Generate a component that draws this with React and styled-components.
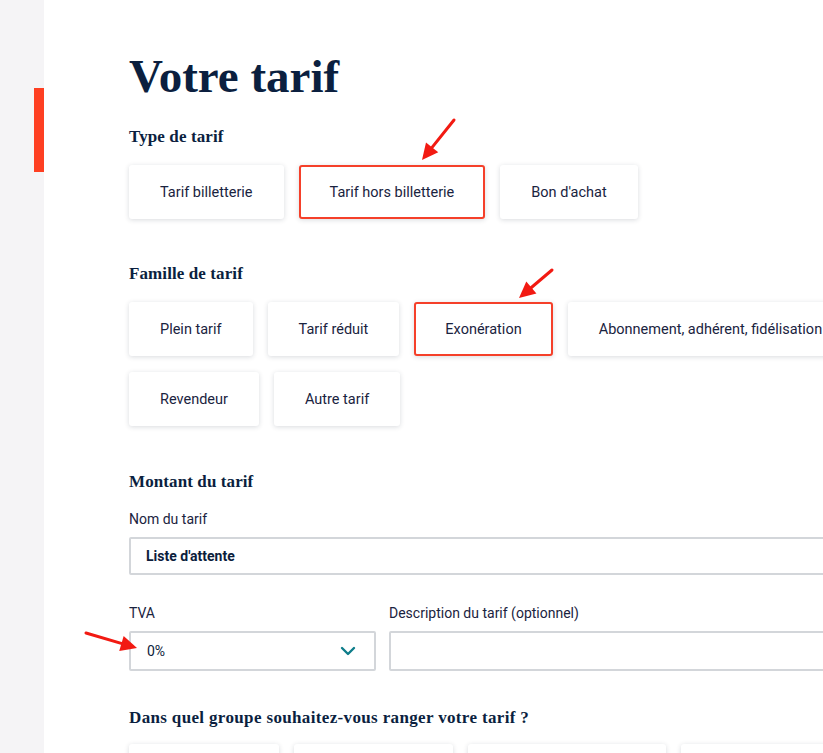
import styled, { createGlobalStyle } from "styled-components";

const GlobalStyle = createGlobalStyle`
  html, body {
    margin: 0;
    padding: 0;
    overflow: hidden;
    background: #ffffff;
  }
  * {
    box-sizing: border-box;
  }
`;

const TYPES = [
  { label: "Tarif billetterie" },
  { label: "Tarif hors billetterie", active: true },
  { label: "Bon d'achat" },
];

const FAMILIES = [
  { label: "Plein tarif" },
  { label: "Tarif réduit" },
  { label: "Exonération", active: true },
  { label: "Abonnement, adhérent, fidélisation" },
  { label: "Revendeur" },
  { label: "Autre tarif" },
];

// groups below the fold: only their top edge shows
const GROUPS = [150, 159, 198, 180];

const ARROWS = [
  { x1: 454, y1: 120, x2: 422, y2: 160 },
  { x1: 552, y1: 270, x2: 519, y2: 298 },
  { x1: 86, y1: 633, x2: 137, y2: 648 },
];

const Arrow = ({ x1, y1, x2, y2 }) => {
  const angle = Math.atan2(y2 - y1, x2 - x1);
  const len = 18;
  const spread = 0.45;
  const ax = x2 - len * Math.cos(angle - spread);
  const ay = y2 - len * Math.sin(angle - spread);
  const bx = x2 - len * Math.cos(angle + spread);
  const by = y2 - len * Math.sin(angle + spread);
  const ex = x2 - 12 * Math.cos(angle);
  const ey = y2 - 12 * Math.sin(angle);
  return (
    <g>
      <line x1={x1} y1={y1} x2={ex} y2={ey} stroke="#f21a12" strokeWidth="3" strokeLinecap="round" />
      <polygon points={`${x2},${y2} ${ax},${ay} ${bx},${by}`} fill="#f21a12" />
    </g>
  );
};

const Chevron = () => (
  <svg width="16" height="10" viewBox="0 0 16 10">
    <path d="M2 2l6 6 6-6" fill="none" stroke="#0e7d8a" strokeWidth="2.4" strokeLinecap="round" strokeLinejoin="round" />
  </svg>
);

const App = () => {
  return (
    <Page>
      <GlobalStyle />
      <Sidebar>
        <SideMarker />
      </Sidebar>
      <Main>
        <Title>Votre tarif</Title>

        <SectionTitle $top={21}>Type de tarif</SectionTitle>
        <Choices>
          {TYPES.map((item, idx) => (
            <Choice key={idx} $active={item.active}>
              {item.label}
            </Choice>
          ))}
        </Choices>

        <SectionTitle $top={43}>Famille de tarif</SectionTitle>
        <Choices>
          {FAMILIES.map((item, idx) => (
            <Choice key={idx} $active={item.active}>
              {item.label}
            </Choice>
          ))}
        </Choices>

        <SectionTitle $top={44}>Montant du tarif</SectionTitle>
        <Field $top={16}>
          <Label>Nom du tarif</Label>
          <Input $strong>Liste d'attente</Input>
        </Field>

        <FieldRow>
          <Field>
            <Label>TVA</Label>
            <Select>
              <span>0%</span>
              <Chevron />
            </Select>
          </Field>
          <Field>
            <Label>Description du tarif (optionnel)</Label>
            <Input $tall />
          </Field>
        </FieldRow>

        <SectionTitle $top={35} $wide>
          Dans quel groupe souhaitez-vous ranger votre tarif ?
        </SectionTitle>
        <Choices $top={14}>
          {GROUPS.map((width, idx) => (
            <Choice key={idx} style={{ width }} />
          ))}
        </Choices>
      </Main>
      <Annotations width="823" height="753" viewBox="0 0 823 753">
        {ARROWS.map((a, idx) => (
          <Arrow key={idx} {...a} />
        ))}
      </Annotations>
    </Page>
  );
};

export default App;

const Page = styled.div`
  position: relative;
  display: flex;
  width: 823px;
  height: 753px;
  overflow: hidden;
  background: #ffffff;
`;

const Sidebar = styled.aside`
  flex: 0 0 44px;
  display: flex;
  flex-direction: column;
  align-items: flex-end;
  padding-top: 88px;
  background: #f5f4f6;
`;

const SideMarker = styled.div`
  width: 10px;
  height: 84px;
  background: #fe3f22;
`;

const Main = styled.main`
  flex: 0 0 auto;
  width: 945px;
  padding: 49px 0 0 85px;
  color: #0c1d3c;
`;

const Title = styled.h1`
  margin: 0;
  font-family: "Liberation Serif", "DejaVu Serif", serif;
  font-weight: 700;
  font-size: 47px;
  line-height: 55px;
  color: #0b1f3f;
`;

const SectionTitle = styled.h2`
  margin: ${({ $top }) => $top || 0}px 0 0;
  font-family: "Liberation Serif", "DejaVu Serif", serif;
  font-weight: 700;
  font-size: 17px;
  line-height: 24px;
  letter-spacing: ${({ $wide }) => ($wide ? "0.35px" : "0.1px")};
  color: #0b1f3f;
`;

const Choices = styled.div`
  display: flex;
  flex-wrap: wrap;
  gap: 16px 15px;
  margin-top: ${({ $top }) => $top || 16}px;
`;

const Choice = styled.button`
  display: flex;
  align-items: center;
  justify-content: center;
  height: 54px;
  padding: 0 29px;
  border: 2px solid ${({ $active }) => ($active ? "#f5402a" : "transparent")};
  border-radius: 3px;
  background: #ffffff;
  box-shadow: 0 1px 5px rgba(20, 30, 50, 0.16);
  font-family: Roboto, "Noto Sans", sans-serif;
  font-size: 14.5px;
  color: #1a2340;
  white-space: nowrap;
`;

const Field = styled.div`
  display: flex;
  flex-direction: column;
  gap: 9px;
  margin-top: ${({ $top }) => $top || 0}px;
`;

const Label = styled.label`
  font-family: Roboto, "Noto Sans", sans-serif;
  font-size: 14px;
  line-height: 18px;
  color: #1a2340;
`;

const Input = styled.div`
  display: flex;
  align-items: center;
  height: ${({ $tall }) => ($tall ? 40 : 38)}px;
  padding: 0 15px;
  border: 2px solid #d3d6da;
  border-radius: 2px;
  background: #ffffff;
  font-family: Roboto, "Noto Sans", sans-serif;
  font-size: 14px;
  font-weight: ${({ $strong }) => ($strong ? 700 : 400)};
  color: #0c1d3c;
`;

const FieldRow = styled.div`
  display: grid;
  grid-template-columns: 247px 1fr;
  gap: 13px;
  margin-top: 29px;
`;

const Select = styled.div`
  display: flex;
  align-items: center;
  justify-content: space-between;
  height: 40px;
  padding: 0 18px 0 16px;
  border: 2px solid #d3d6da;
  border-radius: 2px;
  background: #ffffff;
  font-family: Roboto, "Noto Sans", sans-serif;
  font-size: 14px;
  color: #0c1d3c;
`;

const Annotations = styled.svg`
  position: absolute;
  left: 0;
  top: 0;
  pointer-events: none;
`;
